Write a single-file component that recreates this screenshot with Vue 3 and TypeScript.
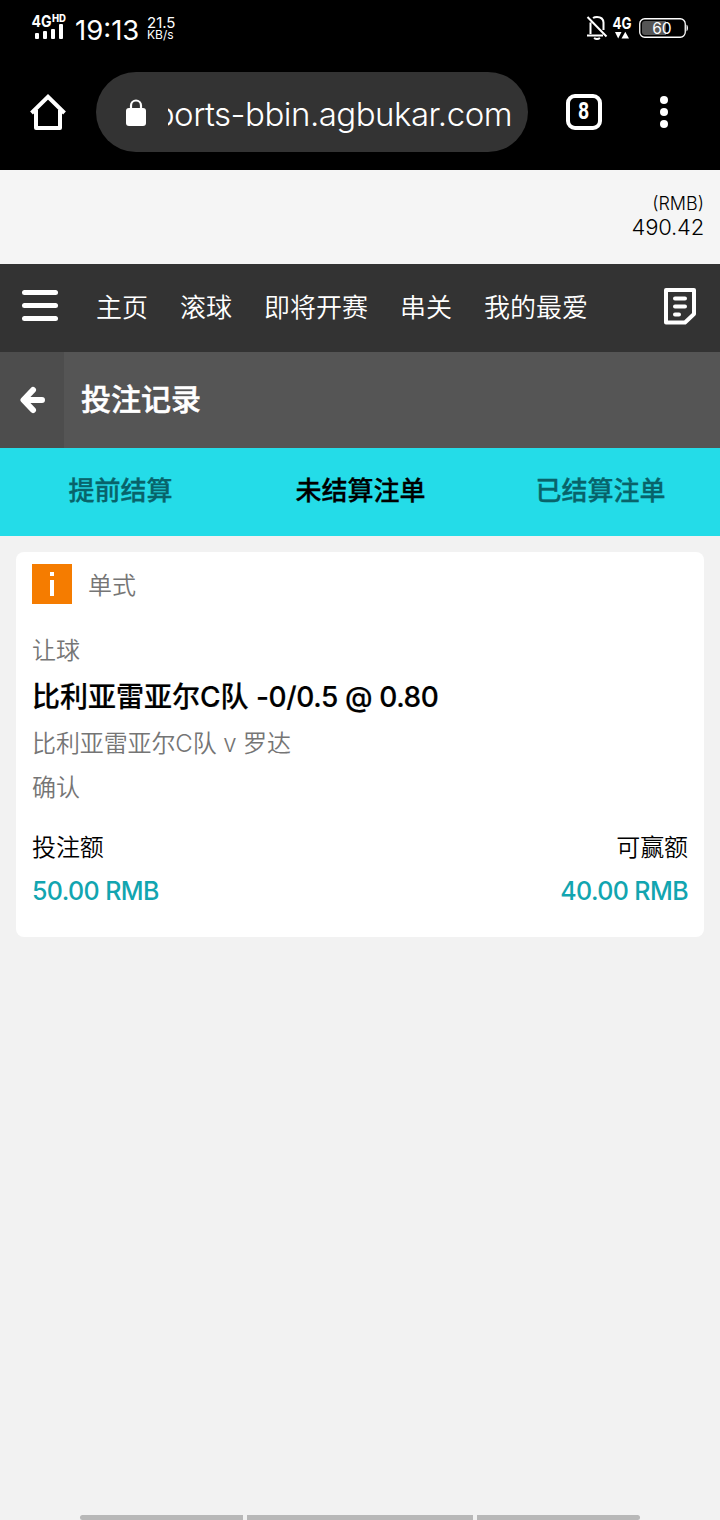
<script setup lang="ts">
const navItems: string[] = ['主页', '滚球', '即将开赛', '串关', '我的最爱']
const tabs: { label: string; active: boolean }[] = [
  { label: '提前结算', active: false },
  { label: '未结算注单', active: true },
  { label: '已结算注单', active: false },
]
const amounts: { label: string; value: string }[] = [
  { label: '投注额', value: '50.00 RMB' },
  { label: '可赢额', value: '40.00 RMB' },
]
</script>

<template>
  <div class="screen">
    <header class="browser">
      <div class="status">
        <svg class="signal" width="36" height="28" viewBox="0 0 36 28">
          <text x="0.5" y="13" class="net" textLength="20" lengthAdjust="spacingAndGlyphs">4G</text>
          <text x="21" y="8" class="hd" textLength="14" lengthAdjust="spacingAndGlyphs">HD</text>
          <g fill="#fff">
            <rect x="4" y="19" width="4" height="6" rx="1" />
            <rect x="12" y="17" width="4" height="8" rx="1" />
            <rect x="20" y="15" width="4" height="10" rx="1" />
            <rect x="28" y="10" width="4" height="15" rx="1" />
          </g>
        </svg>
        <span class="clock">19:13</span>
        <span class="speed"><span>21.5</span><span class="unit">KB/s</span></span>
        <span class="spacer"></span>
        <svg class="bell" width="22" height="26" viewBox="0 0 22 26" fill="none" stroke="#fff" stroke-width="2">
          <path d="M4.5 20V8.500M7 4Q8.500 3 11 3Q17 3 17.500 8.500V16M1 21.500H17M1.500 3L20.500 22.500" />
          <path d="M8 24Q11 26 14 24" />
        </svg>
        <svg class="data" width="20" height="26" viewBox="0 0 20 26">
          <text x="0.5" y="14.500" class="net" textLength="19" lengthAdjust="spacingAndGlyphs">4G</text>
          <path d="M3 18H9.500L6.200 24.500ZM9.500 24.500H17L13.300 17.800Z" fill="#fff" />
        </svg>
        <svg class="battery" width="50" height="22" viewBox="0 0 50 22">
          <rect x="0.750" y="1.750" width="45.500" height="18.500" rx="5" fill="none" stroke="#fff" stroke-width="1.300" />
          <path d="M6 4H27V18H6Q3 18 3 15V7Q3 4 6 4Z" fill="#555" />
          <path d="M47.500 7.500Q49 8 49 11Q49 14 47.500 14.500Z" fill="#fff" />
          <text x="13.200" y="16.700" class="charge" textLength="19.500" lengthAdjust="spacingAndGlyphs">60</text>
        </svg>
      </div>
      <div class="toolbar">
        <svg class="home" width="40" height="40" viewBox="0 0 40 40" fill="none" stroke="#fff" stroke-width="4" stroke-linejoin="round">
          <path d="M3.500 21L20 4.800L36.500 21" stroke-linejoin="miter" />
          <path d="M8 18V36H32V18" />
        </svg>
        <div class="address">
          <svg width="20" height="27" viewBox="0 0 20 27">
            <path d="M5 10V6.500A5 5 0 0 1 15 6.500V10" fill="none" stroke="#fff" stroke-width="2.200" />
            <rect y="9" width="20" height="18" rx="3" fill="#fff" />
          </svg>
          <div class="url"><span>ports-bbin.agbukar.com</span></div>
        </div>
        <div class="count"><span>8</span></div>
        <div class="dots"><i></i><i></i><i></i></div>
      </div>
    </header>

    <section class="wallet">
      <span class="currency">(RMB)</span>
      <span class="balance">490.42</span>
    </section>

    <nav class="nav">
      <div class="burger"><i></i><i></i><i></i></div>
      <a v-for="item in navItems" :key="item">{{ item }}</a>
      <svg class="slip" width="32" height="37" viewBox="0 0 32 37" fill="none" stroke="#fff" stroke-width="4">
        <path d="M2 2H30V26L21 34.500H2Z" stroke-linejoin="round" />
        <path d="M11 10.500H21M11 18.500H21M11 26.500H15" stroke-linecap="round" />
      </svg>
    </nav>

    <section class="heading">
      <div class="back">
        <svg width="26" height="28" viewBox="0 0 26 28" fill="none" stroke="#fff" stroke-width="6" stroke-linecap="round" stroke-linejoin="round">
          <path d="M13 4L3.500 14L13 24M4 14H22" />
        </svg>
      </div>
      <h1>投注记录</h1>
    </section>

    <section class="tabs">
      <div v-for="tab in tabs" :key="tab.label" :class="{ active: tab.active }">{{ tab.label }}</div>
    </section>

    <article class="card">
      <div class="kind">
        <span class="info"><i></i><i class="stem"></i></span>
        <span>单式</span>
      </div>
      <div class="market">让球</div>
      <div class="pick">比利亚雷亚尔C队 <span class="odds">-0/0.5 @ 0.80</span></div>
      <div class="match">比利亚雷亚尔C队 v 罗达</div>
      <div class="state">确认</div>
      <div class="amounts">
        <div v-for="a in amounts" :key="a.label" class="amount">
          <span>{{ a.label }}</span>
          <strong>{{ a.value }}</strong>
        </div>
      </div>
    </article>

    <footer class="gestures"><i></i><i class="mid"></i><i></i></footer>
  </div>
</template>

<style>
body {
  margin: 0;
}
</style>

<style scoped>
.screen {
  display: flex;
  flex-direction: column;
  width: 720px;
  height: 1520px;
  overflow: hidden;
  background: #f2f2f2;
  color: #000;
  font-family: Inter, "Noto Sans CJK SC", sans-serif;
  font-weight: 350;
  white-space: nowrap;
}
svg {
  overflow: visible;
}
.browser {
  height: 170px;
  background: #000;
  color: #fff;
}
.status {
  display: flex;
  align-items: flex-start;
  height: 72px;
  box-sizing: border-box;
  padding: 14px 31px 0;
}
.net {
  font: 700 16px Inter, sans-serif;
  fill: #fff;
}
.hd {
  font: 800 10px Inter, sans-serif;
  fill: #fff;
}
.clock {
  margin: 0 0 0 8px;
  width: 64px;
  font-size: 27.500px;
  line-height: 32px;
  font-weight: 400;
}
.speed {
  display: flex;
  flex-direction: column;
  margin-left: 8px;
  font-size: 15px;
  line-height: 12px;
  font-weight: 400;
  padding-top: 3px;
}
.unit {
  font-size: 12px;
}
.spacer {
  flex: 1;
}
.data {
  margin-left: 4px;
}
.battery {
  margin: 3px 0 0 7px;
}
.charge {
  font: 400 16px Inter, sans-serif;
  fill: #fff;
}
.toolbar {
  display: flex;
  align-items: center;
  height: 80px;
  padding-left: 28px;
}
.address {
  display: flex;
  align-items: center;
  box-sizing: border-box;
  width: 432px;
  height: 80px;
  margin-left: 28px;
  padding: 0 16px 0 30px;
  border-radius: 40px;
  background: #333;
}
.url {
  display: flex;
  justify-content: flex-end;
  overflow: hidden;
  width: 344px;
  margin-left: 22px;
  font-size: 33px;
  line-height: 44px;
  font-weight: 300;
  letter-spacing: -0.500px;
  padding-top: 3px;
}
.count {
  box-sizing: border-box;
  width: 36px;
  height: 36px;
  margin-left: 38px;
  border: 4px solid #fff;
  border-radius: 9px;
  font: 700 23px/28px Roboto, sans-serif;
  text-align: center;
}
.count span {
  display: inline-block;
  transform: scaleX(0.85);
}
.dots {
  display: flex;
  flex-direction: column;
  gap: 4px;
  margin-left: 58px;
}
.dots i {
  width: 8px;
  height: 8px;
  border-radius: 50%;
  background: #fff;
}
.wallet {
  display: flex;
  flex-direction: column;
  align-items: flex-end;
  box-sizing: border-box;
  height: 94px;
  padding: 23px 16px 0 0;
  background: #f5f5f5;
  font-weight: 300;
}
.currency {
  font-size: 18px;
  line-height: 22px;
}
.balance {
  font-size: 22px;
  line-height: 25px;
  letter-spacing: -0.200px;
}
.nav {
  display: flex;
  align-items: center;
  height: 88px;
  box-sizing: border-box;
  padding: 0 24px 4px 22px;
  background: #333;
  color: #fff;
  font-size: 26px;
}
.nav a {
  margin-right: 32px;
  padding-bottom: 2px;
}
.burger {
  display: flex;
  flex-direction: column;
  gap: 8px;
  width: 36px;
  margin: 0 38px 1px 0;
}
.burger i {
  height: 5px;
  border-radius: 2.500px;
  background: #fff;
}
.slip {
  margin-left: auto;
}
.heading {
  display: flex;
  height: 96px;
  background: #555;
  color: #fff;
}
.back {
  display: flex;
  align-items: center;
  justify-content: center;
  box-sizing: border-box;
  width: 64px;
  padding-left: 2px;
  background: #4d4d4d;
}
h1 {
  margin: 0 0 0 17px;
  font-size: 30px;
  line-height: 95px;
  font-weight: 500;
  -webkit-text-stroke: 0.500px currentColor;
}
.tabs {
  display: grid;
  grid-template-columns: repeat(3, 240px);
  height: 88px;
  background: #24dce8;
  color: #08636a;
  font-size: 26px;
  line-height: 86px;
  font-weight: 500;
  text-align: center;
  -webkit-text-stroke: 0.300px currentColor;
}
.tabs div {
  padding-left: 1px;
}
.active {
  color: #000;
}
.card {
  box-sizing: border-box;
  height: 385px;
  margin: 16px 16px 0;
  padding: 12px 16px 0;
  border-radius: 8px;
  background: #fff;
  color: #757575;
  font-size: 24px;
  letter-spacing: -0.120px;
}
.kind {
  display: flex;
  align-items: center;
  gap: 16px;
  height: 39px;
}
.info {
  display: flex;
  flex-direction: column;
  align-items: center;
  gap: 4px;
  box-sizing: border-box;
  width: 40px;
  height: 40px;
  padding-top: 8px;
  background: #f57c00;
}
.info i {
  width: 4px;
  height: 4px;
  background: #fff;
}
.info .stem {
  height: 16px;
}
.market {
  margin-top: 30px;
  line-height: 36px;
}
.pick {
  margin-top: 8px;
  color: #000;
  font-size: 28px;
  line-height: 40px;
  font-weight: 500;
  letter-spacing: 0;
  -webkit-text-stroke: 0.200px currentColor;
}
.odds {
  letter-spacing: -0.380px;
}
.match {
  margin-top: 9px;
  line-height: 36px;
}
.state {
  margin-top: 8px;
  line-height: 36px;
}
.amounts {
  display: flex;
  justify-content: space-between;
  margin-top: 24px;
  color: #000;
}
.amount {
  display: flex;
  flex-direction: column;
  line-height: 36px;
}
.amount:last-child {
  align-items: flex-end;
}
.amount strong {
  margin-top: 7px;
  color: #12a5b0;
  font-size: 25px;
  font-weight: 500;
  letter-spacing: -0.600px;
}
.gestures {
  display: flex;
  gap: 4px;
  width: 560px;
  margin: auto auto 0;
}
.gestures i {
  width: 163px;
  height: 5px;
  background: #b8b8b8;
}
.gestures .mid {
  width: 226px;
}
.gestures i:first-child {
  border-radius: 3px 0 0 3px;
}
.gestures i:last-child {
  border-radius: 0 3px 3px 0;
}
</style>
